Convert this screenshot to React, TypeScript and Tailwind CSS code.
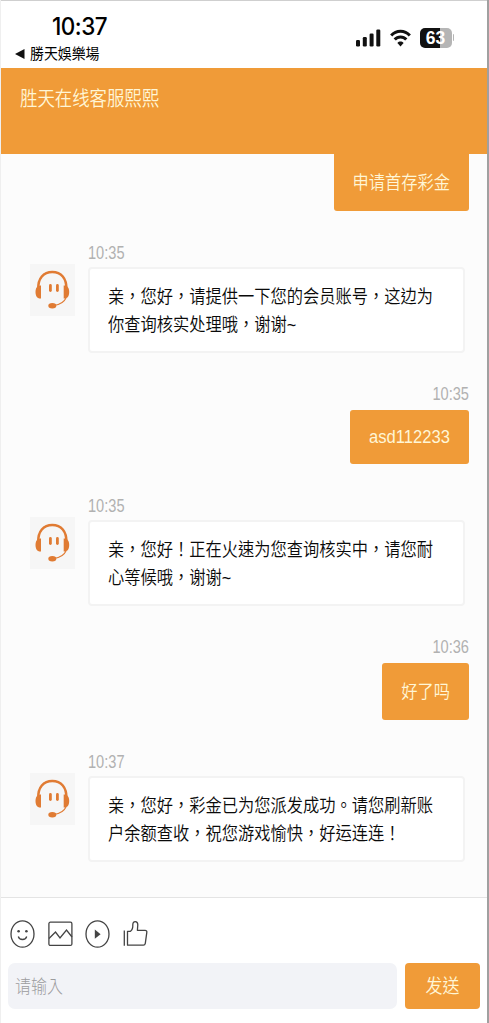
import type { ReactNode } from 'react';
import clsx from 'clsx';

type Message = {
  from: 'agent' | 'user';
  time?: string;
  lines: string[];
};

const messages: Message[] = [
  { from: 'user', lines: ['申请首存彩金'] },
  {
    from: 'agent',
    time: '10:35',
    lines: ['亲，您好，请提供一下您的会员账号，这边为', '你查询核实处理哦，谢谢~'],
  },
  { from: 'user', time: '10:35', lines: ['asd112233'] },
  {
    from: 'agent',
    time: '10:35',
    lines: ['亲，您好！正在火速为您查询核实中，请您耐', '心等候哦，谢谢~'],
  },
  { from: 'user', time: '10:36', lines: ['好了吗'] },
  {
    from: 'agent',
    time: '10:37',
    lines: ['亲，您好，彩金已为您派发成功。请您刷新账', '户余额查收，祝您游戏愉快，好运连连！'],
  },
];

// Tall, narrow lettering used all over the chat
function Tall({ children, className = 'scale-y-[1.15]' }: { children: ReactNode; className?: string }) {
  return <span className={clsx('inline-block whitespace-nowrap', className)}>{children}</span>;
}

function StatusBar() {
  return (
    <div className="flex h-[68px] shrink-0 justify-between border-t border-[#cfcfcf] bg-white pl-[14px] pr-[33px]">
      <div className="pt-[13px]">
        <div className="pl-[37px] font-['Inter'] text-[22.5px] font-medium leading-[25px] tracking-[-0.5px] text-black">
          <Tall className="scale-y-[1.05]">10:37</Tall>
        </div>
        <div className="mt-[5px] flex h-5 items-center gap-[5px] text-[13.9px] leading-5 text-black">
          <svg width="10" height="10" viewBox="0 0 10 10">
            <path d="M0 5 9.5 0v10z" fill="#111" />
          </svg>
          <Tall className="scale-y-[1.08]">勝天娛樂場</Tall>
        </div>
      </div>
      <div className="flex h-[73px] items-center">
        <svg width="25" height="18" viewBox="0 0 25 18" fill="#111">
          <rect x="0" y="11" width="4" height="6.5" rx="1.2" />
          <rect x="6.8" y="8" width="4" height="9.5" rx="1.2" />
          <rect x="13.6" y="4.5" width="4" height="13" rx="1.2" />
          <rect x="20.3" y="0.5" width="4" height="17" rx="1.2" />
        </svg>
        <svg
          className="ml-[9px]"
          width="21"
          height="18"
          viewBox="0 0 21 18"
          fill="none"
          stroke="#111"
          strokeWidth="3"
        >
          <path d="M1.2 6.4C6.3 .7 14.7 .7 19.8 6.4" />
          <path d="M4.7 10.6c3.2-3.6 8.4-3.6 11.6 0" />
          <path d="M10.5 17.5 7.4 14c1.7-1.9 4.5-1.9 6.2 0z" fill="#111" stroke="none" />
        </svg>
        <div className="ml-[9px] flex h-5 w-8 items-center justify-center rounded-[5px] bg-linear-to-r from-[#111] from-62% to-[#b5b5b5] to-62% text-[17.5px] font-bold leading-5 text-white">
          <Tall className="scale-y-[1.05]">63</Tall>
        </div>
        <div className="ml-px h-[7px] w-[1.5px] rounded-r bg-[#b5b5b5]" />
      </div>
    </div>
  );
}

function Avatar() {
  return (
    <div className="mt-[21px] flex h-[52px] w-[45px] shrink-0 bg-[#f6f6f6]">
      <svg width="45" height="52" viewBox="0 0 45 52" fill="none">
        <path d="M8.3 25C7.8 14.5 13.5 8 22.3 8s14.5 6.5 14 17" stroke="#e07b33" strokeWidth="2.5" />
        <path d="M11 21.5v13c-3.8.4-5.5-2.6-5.5-6.5s1.7-6.9 5.5-6.5z" fill="#e07b33" />
        <path d="M33.7 21.5v13c3.8.4 5.5-2.6 5.5-6.5s-1.7-6.9-5.5-6.5z" fill="#e07b33" />
        <path d="M36 34c-2 4.5-5.5 6.5-12 7.5" stroke="#e07b33" strokeWidth="1.1" />
        <ellipse cx="22.3" cy="41.8" rx="4" ry="2.7" fill="#e07b33" />
        <rect x="19" y="20" width="2.8" height="8" rx="1.4" fill="#e07b33" />
        <rect x="26" y="20" width="2.8" height="8" rx="1.4" fill="#e07b33" />
      </svg>
    </div>
  );
}

function Time({ value }: { value: string }) {
  return (
    <div className="h-5 text-[14.6px] leading-5 text-[#b1b1b1]">
      <Tall className="scale-y-[1.2]">{value}</Tall>
    </div>
  );
}

function AgentMessage({ message }: { message: Message }) {
  return (
    <div className="flex pl-[29px]">
      <Avatar />
      <div className="ml-[13px]">
        {message.time && <Time value={message.time} />}
        <div className="mt-1 flex h-[86px] w-[377px] flex-col justify-center rounded-[4px] border-2 border-[#f3f3f3] bg-white pl-[18px] text-[16.25px] font-[350] leading-7 text-[#0a0a0a]">
          {message.lines.map((line) => (
            <div key={line} className="h-7">
              <Tall>{line}</Tall>
            </div>
          ))}
        </div>
      </div>
    </div>
  );
}

function UserMessage({ message }: { message: Message }) {
  const latin = /^\w+$/.test(message.lines[0]);

  return (
    <div className="-mt-px flex flex-col items-end pr-[18px]">
      {message.time && <Time value={message.time} />}
      <div
        className={clsx(
          'flex items-center bg-[#f09b38] px-[19px] text-[#fff6d6]',
          message.time ? 'mt-1.5 rounded-[3px]' : 'rounded-b-[3px]',
          !message.time && 'h-[58px] pt-px text-[16.25px] font-[350]',
          message.time && (latin ? 'h-[54px] text-[16.6px]' : 'h-[57px] text-[16.25px] font-[350]'),
        )}
      >
        <Tall>{message.lines[0]}</Tall>
      </div>
    </div>
  );
}

function Toolbar() {
  return (
    <div className="flex h-[28px] items-center gap-[12.6px] text-[#444]">
      <svg width="25" height="28" viewBox="0 0 25 28" fill="none" stroke="currentColor" strokeWidth="1.3">
        <ellipse cx="12.5" cy="14" rx="11.5" ry="13.2" />
        <path d="M8.3 16.5c1 4 7.4 4 8.4 0" />
        <circle cx="8.6" cy="11.2" r="1.3" fill="currentColor" stroke="none" />
        <circle cx="16.4" cy="11.2" r="1.3" fill="currentColor" stroke="none" />
      </svg>
      <svg width="25" height="28" viewBox="0 0 25 28" fill="none" stroke="currentColor" strokeWidth="1.3">
        <rect x="0.9" y="2.2" width="23" height="23.2" rx="1.5" />
        <path d="m1 18.5 6.5-6.5 4.5 6 6.5-8 5.5 7" />
      </svg>
      <svg width="25" height="28" viewBox="0 0 25 28" fill="none" stroke="currentColor" strokeWidth="1.3">
        <ellipse cx="12.5" cy="14" rx="11.5" ry="13.2" />
        <path d="M9.8 9.6v9.2l5.8-4.6z" fill="currentColor" stroke="none" />
      </svg>
      <svg width="25" height="28" viewBox="0 0 25 28" fill="none" stroke="currentColor" strokeWidth="1.3">
        <path d="M1.3 10.5v15.2" />
        <path
          d="M4.5 25.2V11.3h3c2-1.5 2.5-3.5 2.3-6.5 0-4.3 5-4.3 5 0l-.4 5.5h7.6c1.4 0 2 .8 1.8 2l-1.5 11c-.2 1.2-.8 1.9-1.9 1.900z"
          strokeLinejoin="round"
        />
      </svg>
    </div>
  );
}

export default function App() {
  return (
    <div className="flex h-[1023px] w-[489px] flex-col overflow-hidden border-l border-l-[#efefef] border-r-2 border-r-[#a0a0a0] bg-[#fcfcfc] font-['Liberation_Sans','Noto_Sans_CJK_TC',sans-serif]">
      <StatusBar />

      <header className="h-[86px] shrink-0 bg-[#f09b38] pl-[19px] pt-[17px] text-[17.4px] font-[350] leading-7 text-[#fff6d6]">
        <Tall>胜天在线客服熙熙</Tall>
      </header>

      <main className="flex h-[743px] shrink-0 flex-col gap-8">
        {messages.map((message, i) =>
          message.from === 'agent' ? (
            <AgentMessage key={i} message={message} />
          ) : (
            <UserMessage key={i} message={message} />
          ),
        )}
      </main>

      <footer className="flex-1 border-t border-[#e4e4e4] bg-white pl-[7px] pt-[22px]">
        <div className="pl-[2px]">
          <Toolbar />
        </div>
        <div className="mt-[15px] flex gap-2">
          <div className="flex h-[46px] w-[389px] items-center rounded-[7px] bg-[#f2f3f7] pl-[7px] pt-0.5 text-[16px] font-light text-[#9c9c9e]">
            <Tall>请输入</Tall>
          </div>
          <button className="flex h-[46px] w-[75px] items-center justify-center rounded-[4px] bg-[#f09b38] pt-0.5 text-[17px] font-[350] text-[#fff6d6]">
            <Tall>发送</Tall>
          </button>
        </div>
      </footer>
    </div>
  );
}
